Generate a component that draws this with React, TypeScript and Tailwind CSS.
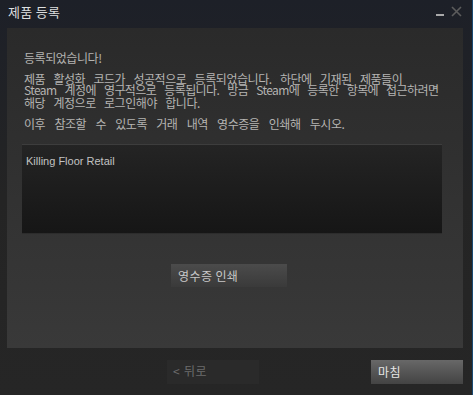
const KR = "font-['Noto_Sans_CJK_KR','Noto_Sans',sans-serif]"

function TitleBar() {
  return (
    <div className="flex h-[28px] items-start justify-between pl-2 pr-[10px] pt-[4px]">
      <span className={`${KR} text-[13px] leading-[16px] tracking-[0.3px] text-[#dcdedf]`}>제품 등록</span>
      <div className="flex items-start gap-[7px]">
        <div className="mt-[10px] h-[2px] w-[8px] bg-[#a9a9a9]" />
        <svg width="11" height="11" viewBox="0 0 11 11" className="mt-[2px]">
          <path d="M1 1 L10 10 M10 1 L1 10" stroke="#5c5c5c" strokeWidth="1.6" />
        </svg>
      </div>
    </div>
  )
}

export default function App() {
  return (
    <div className="flex h-[395px] w-[473px] bg-gradient-to-b from-[#1d2028] via-[#242424] to-[#262626]">
      <div className="flex w-[472px] flex-col">
        <TitleBar />

        <div className="ml-[7px] flex h-[320px] w-[456px] flex-col bg-gradient-to-b from-[#2a2a2a] to-[#393939] px-[17px] pt-[22px]">
          <div className={`${KR} whitespace-nowrap text-[12px] tracking-[-0.45px] [word-spacing:6px] text-[#b5b4b2]`}>
            <p className="leading-[15px]">등록되었습니다!</p>
            <div className="mt-[6px]">
              <p className="h-[11px] leading-[15px]">제품 활성화 코드가 성공적으로 등록되었습니다. 하단에 기재된 제품들이</p>
              <p className="h-[13px] leading-[15px] tracking-[-0.6px]">Steam 계정에 영구적으로 등록됩니다. 방금 Steam에 등록한 항목에 접근하려면</p>
              <p className="leading-[15px]">해당 계정으로 로그인해야 합니다.</p>
            </div>
            <p className="mt-[6px] leading-[15px] [word-spacing:7px]">이후 참조할 수 있도록 거래 내역 영수증을 인쇄해 두시오.</p>
          </div>

          <div className="-ml-[2px] mt-[13px] h-[90px] w-[420px] border-t border-[#3d3d3d] border-b border-b-[#2c2c2c] bg-gradient-to-b from-[#242424] to-[#161616] px-[4px] pt-[2px]">
            <span className="font-['Liberation_Sans',Arial,sans-serif] text-[11px] leading-[14px] text-[#c2c2c2]">
              Killing Floor Retail
            </span>
          </div>

          <button
            className={`${KR} ml-[147px] mt-[30px] flex h-[23px] w-[116px] items-center bg-gradient-to-b from-[#4b4b4b] to-[#3a3a3a] pl-[7px] text-[12px] tracking-[0.4px] text-[#c8c8c8]`}
          >
            영수증 인쇄
          </button>
        </div>

        <div className="mt-[12px] flex items-start">
          <button
            className={`${KR} ml-[167px] flex h-[24px] w-[92px] items-center gap-[4px] bg-[#2a2a2a] pl-[6px] pb-[3px] text-[12px] tracking-[0.4px] text-[#6c6c6c]`}
          >
            <span>&lt;</span>
            <span>뒤로</span>
          </button>
          <button
            className={`${KR} ml-[112px] flex h-[24px] w-[92px] items-center bg-gradient-to-b from-[#686868] to-[#434343] pl-[7px] text-[12px] tracking-[0.4px] text-[#e6e6e6]`}
          >
            마침
          </button>
        </div>
      </div>
      <div className="w-px bg-[#1a4a72]" />
    </div>
  )
}
